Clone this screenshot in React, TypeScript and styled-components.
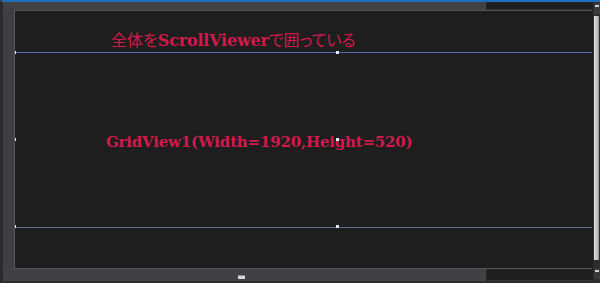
import React from "react";
import styled, { createGlobalStyle } from "styled-components";

const Global = createGlobalStyle`
  html, body { margin: 0; padding: 0; background: #3e3e40; }
  body { width: 600px; height: 283px; overflow: hidden; }
`;

const ACCENT = "#d3194c";

const Frame = styled.div`
  width: 600px;
  height: 283px;
  display: flex;
  flex-direction: column;
  background: #3f3f41;
  overflow: hidden;
`;

const TopAccent = styled.div`
  height: 2px;
  flex: none;
  background: #1c6fbd;
  margin-left: 2px;
`;

const Body = styled.div`
  flex: 1;
  display: flex;
  min-height: 0;
`;

const Workspace = styled.div`
  width: 589px;
  flex: none;
  display: flex;
  flex-direction: column;
  border-left: 3px solid #2b2b2c;
`;

const Strip = styled.div<{ $h: number }>`
  height: ${(p) => p.$h}px;
  flex: none;
  display: flex;
`;

const StripFill = styled.div`
  width: 483px;
  background: #414143;
  display: flex;
  justify-content: center;
  align-items: flex-end;
  padding-bottom: 2px;
  box-sizing: border-box;
`;

const ZoomIcon = styled.span`
  width: 7px;
  height: 4px;
  margin-left: -6px;
  background: linear-gradient(180deg, #8a8a8a 0 1px, #d8d8d8 1px);
`;

const StripWell = styled.div`
  flex: 1;
  background: #1e1e1f;
  border-left: 1px solid #2a2a2b;
  border-bottom: 1px solid #303032;
  border-top: 1px solid #262627;
`;

const CanvasRow = styled.div`
  height: 259px;
  flex: none;
  display: flex;
`;

const Gutter = styled.div`
  width: 11px;
  flex: none;
  background: #3f3f41;
`;

const Canvas = styled.div`
  flex: 1;
  background: #1e1e1e;
  border-top: 1px solid #505052;
  border-left: 1px solid #59595b;
  border-bottom: 1px solid #555557;
  overflow: hidden;
  display: flex;
  flex-direction: column;
`;

const Heading = styled.div`
  height: 41px;
  box-sizing: border-box;
  padding: 18px 0 0 96px;
  line-height: 20px;
  font-size: 16px;
  color: ${ACCENT};
  font-family: "Noto Sans CJK JP", sans-serif;
  font-feature-settings: "palt";
  white-space: nowrap;
`;

const Latin = styled.span<{ $size: number }>`
  font-family: "DejaVu Serif", "Liberation Serif", serif;
  font-weight: bold;
  font-size: ${(p) => p.$size}px;
  letter-spacing: -0.2px;
`;

const GridBox = styled.div`
  position: relative;
  margin-left: -1px;
  width: 647px;
  height: 176px;
  box-sizing: border-box;
  border-top: 1px solid #4b6fb0;
  border-left: 1px solid #4b6fb0;
  border-bottom: 1px solid #5c6d86;
  padding: 79px 0 0 91px;
  line-height: 20px;
  color: ${ACCENT};
  white-space: nowrap;
`;

const Handle = styled.span<{ $x: string; $y: string }>`
  position: absolute;
  left: ${(p) => p.$x};
  top: ${(p) => p.$y};
  width: 3px;
  height: 3px;
  margin: -2px 0 0 -2px;
  background: #dfe8ff;
`;

const ScrollBar = styled.div`
  width: 8px;
  flex: none;
  background: #2d2d30;
  border-left: 1px solid #1f1f20;
  box-sizing: border-box;
  display: flex;
  flex-direction: column;
  align-items: center;
  padding: 1px 0 2px;
`;

const ScrollButton = styled.div`
  width: 6px;
  height: 11px;
  flex: none;
  background: #3a3a3d;
  display: flex;
  justify-content: center;
  padding-top: 2px;
  box-sizing: border-box;
  &::before {
    content: "";
    width: 4px;
    height: 2px;
    background: #cfcfcf;
  }
`;

const Thumb = styled.div`
  flex: 1;
  width: 5px;
  margin: 2px 0 8px;
  background: linear-gradient(90deg, #e0e0e0, #b8b8b8 70%, #8e8e8e);
`;

const Footer = styled.div`
  height: 2px;
  flex: none;
  background: #2c2c2e;
`;

export default function App() {
  return (
    <>
      <Global />
      <Frame>
        <TopAccent />
        <Body>
          <Workspace>
            <Strip $h={8}>
              <StripFill />
              <StripWell />
            </Strip>
            <CanvasRow>
              <Gutter />
              <Canvas>
                <Heading>
                  全体を<Latin $size={16}>ScrollViewer</Latin>で囲っている
                </Heading>
                <GridBox>
                  <Handle $x="0" $y="0" />
                  <Handle $x="50%" $y="0" />
                  <Handle $x="0" $y="50%" />
                  <Handle $x="50%" $y="50%" />
                  <Handle $x="0" $y="100%" />
                  <Handle $x="50%" $y="100%" />
                  <Latin $size={15}>GridView1(Width=1920,Height=520)</Latin>
                </GridBox>
              </Canvas>
            </CanvasRow>
            <Strip $h={12}>
              <StripFill>
                <ZoomIcon />
              </StripFill>
              <StripWell />
            </Strip>
          </Workspace>
          <ScrollBar>
            <ScrollButton />
            <Thumb />
            <ScrollButton />
          </ScrollBar>
        </Body>
        <Footer />
      </Frame>
    </>
  );
}
